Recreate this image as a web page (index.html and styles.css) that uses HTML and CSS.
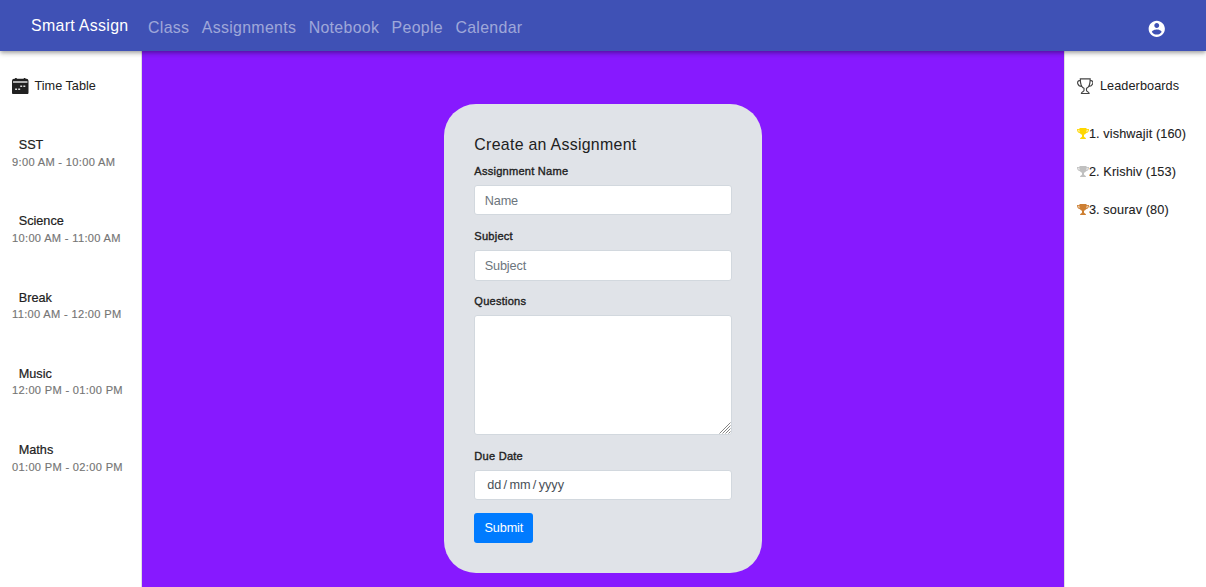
FILE: index.html
```html
<!DOCTYPE html>
<html lang="en">
<head>
<meta charset="utf-8">
<title>Smart Assign</title>
<link rel="stylesheet" href="styles.css">
</head>
<body>
<svg class="defs" width="0" height="0">
  <symbol id="trophy" viewBox="0 0 24 22"><path d="M5 0h14v2h5c0 5-2 7.500-6 8.500-1 1.800-2.300 2.700-4 3.200V17c0 1.500 4 1.500 4 5H6c0-3.500 4-3.500 4-5v-3.300c-1.700-.5-3-1.400-4-3.200C2 9.500 0 7 0 2h5z"/><path fill="#fff" fill-opacity=".6" d="M1.500 3.500H5c0 2 .2 3.800.7 5.200C3 7.800 1.800 6 1.500 3.500zM22.500 3.500H19c0 2-.2 3.800-.7 5.200 2.700-.9 3.900-2.700 4.200-5.200z"/></symbol>
</svg>
<header class="topbar">
  <div class="brand">Smart Assign</div>
  <nav class="nav"><a>Class</a><a>Assignments</a><a>Notebook</a><a>People</a><a>Calendar</a></nav>
  <svg class="account" viewBox="0 0 24 24"><path d="M12 2C6.480 2 2 6.480 2 12s4.480 10 10 10 10-4.480 10-10S17.520 2 12 2zm0 3c1.660 0 3 1.340 3 3s-1.340 3-3 3-3-1.340-3-3 1.340-3 3-3zm0 14.200c-2.500 0-4.710-1.280-6-3.220.03-1.990 4-3.080 6-3.080 1.990 0 5.970 1.090 6 3.080-1.290 1.940-3.500 3.220-6 3.220z"/></svg>
</header>
<div class="layout">
  <aside class="side left">
    <div class="side-title">
      <svg class="title-icon" viewBox="0 0 16 16"><path fill="#212121" d="M2 .8h1V0h1.600v.8h6.800V0H13v.8h1a2 2 0 0 1 2 1.800V14a2 2 0 0 1-2 2H2a2 2 0 0 1-2-2V2.600A2 2 0 0 1 2 .8z"/><path fill="#ddd" d="M1 3.200h14v1.300H1zM8 7.200h1.900v1.500H8zM11 7.200h1.900v1.500H11zM3 10.200h1.900v1.500H3zM6 10.200h1.900v1.500H6z"/></svg>
      <span>Time Table</span>
    </div>
    <div class="slot"><b>SST</b><small>9:00 AM - 10:00 AM</small></div>
    <div class="slot"><b>Science</b><small>10:00 AM - 11:00 AM</small></div>
    <div class="slot"><b>Break</b><small>11:00 AM - 12:00 PM</small></div>
    <div class="slot"><b>Music</b><small>12:00 PM - 01:00 PM</small></div>
    <div class="slot"><b>Maths</b><small>01:00 PM - 02:00 PM</small></div>
  </aside>
  <main class="main">
    <form class="card">
      <h1>Create an Assignment</h1>
      <label>Assignment Name</label>
      <input class="field" placeholder="Name">
      <label>Subject</label>
      <input class="field" placeholder="Subject">
      <label>Questions</label>
      <div class="area-wrap">
        <textarea class="field area"></textarea>
        <svg class="grip" viewBox="0 0 12 12" stroke="#777" stroke-width=".9"><path d="M.5 11.500l11-11M3.500 11.500l8-8M6.500 11.500l5-5M9.500 11.500l2-2"/></svg>
      </div>
      <label>Due Date</label>
      <div class="field date"><span>dd</span><span>/</span><span>mm</span><span>/</span><span>yyyy</span></div>
      <button type="button" class="submit">Submit</button>
    </form>
  </main>
  <aside class="side right">
    <div class="side-title">
      <svg class="title-icon" viewBox="0 0 16 16" fill="none" stroke="#444" stroke-width="1.100"><path d="M3.200.8h9.600c0 5-1.200 8.400-3.600 9.200v2.200c0 .8 2.600 1 2.600 3H4.200c0-2 2.600-2.200 2.600-3V10C4.400 9.200 3.200 5.800 3.200.8zM3.200 2.600C1 2 .2 4 .8 5.600c.6 1.800 2 2.500 3.600 2.600M12.800 2.600c2.200-.6 3 1.400 2.400 3-.6 1.800-2 2.500-3.600 2.600"/></svg>
      <span>Leaderboards</span>
    </div>
    <div class="rank"><svg class="gold"><use href="#trophy"/></svg>1. vishwajit (160)</div>
    <div class="rank"><svg class="silver"><use href="#trophy"/></svg>2. Krishiv (153)</div>
    <div class="rank"><svg class="bronze"><use href="#trophy"/></svg>3. sourav (80)</div>
  </aside>
</div>
</body>
</html>
```
FILE: styles.css
```css
* { box-sizing: border-box; }
body {
  margin: 0;
  height: 587px;
  display: flex;
  flex-direction: column;
  overflow: hidden;
  font-family: "Liberation Sans", Arial, sans-serif;
  font-size: 12.7px;
  color: #212121;
  background: #fff;
}
.defs { display: none; }
.topbar {
  position: relative;
  z-index: 1;
  flex: none;
  height: 51px;
  padding: 0 40px 0 31px;
  display: flex;
  align-items: center;
  background: #3f51b5;
  color: #fff;
  font-size: 15.9px;
  letter-spacing: .32px;
  box-shadow: 0 1.6px 3.2px -1px rgba(0,0,0,.2), 0 3px 4px rgba(0,0,0,.14), 0 1px 8px rgba(0,0,0,.12);
}
.brand { width: 117px; padding-top: 1px; }
.nav { display: flex; gap: 12.400px; padding-top: 5px; color: rgba(255,255,255,.5); }
.account { width: 19.500px; height: 19.500px; margin-left: auto; margin-top: 5.500px; fill: #fff; }
.layout { flex: 1; min-height: 0; display: grid; grid-template-columns: 142.400px 1fr 142.100px; }
.side { padding: 25px 0 0 12px; letter-spacing: .08px; line-height: 19px; }
.left { border-right: 1px solid #e0e0e0; }
.right { border-left: 1px solid #e0e0e0; }
.side-title { display: flex; align-items: center; gap: 6px; height: 20px; }
.title-icon { width: 16.500px; height: 16.500px; flex: none; }
.left .side-title { margin-bottom: 39px; letter-spacing: 0; }
.right .side-title { margin-bottom: 19px; gap: 6.500px; }
.slot { height: 76.300px; display: flex; flex-direction: column; white-space: nowrap; }
.slot b { font-weight: 400; padding-left: 6.700px; height: 18.600px; line-height: 20px; letter-spacing: 0; -webkit-text-stroke: .2px; }
.slot small { font-size: 11.100px; line-height: 16px; letter-spacing: .32px; color: #757575; -webkit-text-stroke: .15px; }
.rank { display: flex; align-items: center; height: 38.200px; white-space: nowrap; letter-spacing: .11px; -webkit-text-stroke: .1px; }
.rank svg { width: 12px; height: 11px; flex: none; margin-top: -1px; }
.gold { fill: #ffd700; }
.silver { fill: #c0c0c0; }
.bronze { fill: #cd7f32; }
.main { background: #8719ff; display: flex; justify-content: center; align-items: flex-start; padding: 53.300px 0 0 .4px; }
.card {
  width: 318px;
  height: 468.700px;
  padding: 30.700px 30px 29px;
  display: flex;
  flex-direction: column;
  border-radius: 32px;
  background: #e0e3e8;
}
.card h1 { margin: 0 0 3px; font-size: 15.900px; font-weight: 400; line-height: 20px; letter-spacing: .29px; }
.card label { height: 27px; line-height: 27px; font-size: 11.100px; letter-spacing: .22px; -webkit-text-stroke: .35px; }
.field {
  display: block;
  width: 258px;
  height: 30.500px;
  flex: none;
  margin: 0 0 7.700px;
  padding: 1px 9.400px 0;
  border: 1px solid #d2d8de;
  border-radius: 3px;
  background: #fff;
  color: #495057;
  font: 12.700px "Liberation Sans", Arial, sans-serif;
  letter-spacing: -.15px;
}
.field::placeholder { color: #6c757d; opacity: 1; }
.area-wrap { position: relative; }
.area { height: 119.500px; resize: none; }
.grip { position: absolute; right: 1px; bottom: 9px; width: 12px; height: 12px; }
.date { display: flex; align-items: center; gap: 2.300px; padding-left: 11.800px; margin-bottom: 12.500px; letter-spacing: 0; }
.submit {
  width: 59px;
  height: 30px;
  flex: none;
  padding: 1px 0 0;
  border: 0;
  border-radius: 3px;
  background: #007bff;
  color: #fff;
  font: 12.700px "Liberation Sans", Arial, sans-serif;
  letter-spacing: -.15px;
}
```
